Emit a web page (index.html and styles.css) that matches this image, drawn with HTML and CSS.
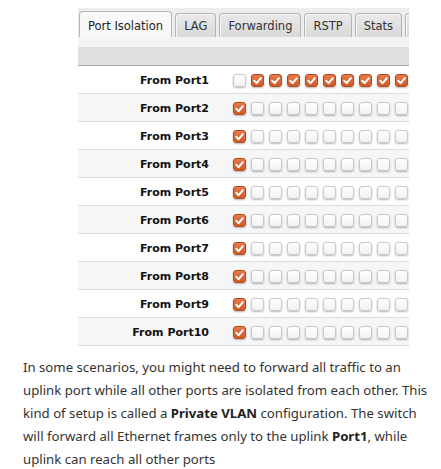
FILE: index.html
```html
<!DOCTYPE html>
<html>
<head>
<meta charset="utf-8">
<link rel="stylesheet" href="styles.css">
</head>
<body>
<div class="shot">
  <div class="tabbar">
    <div class="tab active">Port Isolation</div>
    <div class="tab">LAG</div>
    <div class="tab">Forwarding</div>
    <div class="tab">RSTP</div>
    <div class="tab">Stats</div>
    <div class="tab more"></div>
  </div>
  <div class="strip"></div>
  <div class="band"></div>
  <div class="rows" id="rows"></div>
</div>
<p class="text">In some scenarios, you might need to forward all traffic to an uplink port while all other ports are isolated from each other. This kind of setup is called a <b>Private VLAN</b> configuration. The switch will forward all Ethernet frames only to the uplink <b>Port1</b>, while uplink can reach all other ports</p>
<script>
(function () {
  var rows = document.getElementById('rows');
  var check = '<svg viewBox="0 0 13 13" width="13" height="13"><polyline points="3.2,6.8 5.6,9.1 9.9,4.2" fill="none" stroke="#fff" stroke-width="2" stroke-linecap="round" stroke-linejoin="round"/></svg>';
  for (var r = 1; r <= 10; r++) {
    var row = document.createElement('div');
    row.className = 'row' + (r % 2 === 0 ? ' alt' : '');
    var html = '<div class="label">From Port' + r + '</div><div class="boxes">';
    for (var c = 1; c <= 10; c++) {
      var on = r === 1 ? c !== 1 : c === 1;
      html += on ? '<span class="cb on">' + check + '</span>' : '<span class="cb"></span>';
    }
    html += '</div>';
    row.innerHTML = html;
    rows.appendChild(row);
  }
})();
</script>
</body>
</html>
```

FILE: styles.css
```css
html, body {
  margin: 0;
  padding: 0;
  background: #fff;
}

.shot {
  margin: 8px 0 0 78px;
  width: 331px;
  overflow: hidden;
}

.tabbar {
  height: 29px;
  background: #ededed;
  display: flex;
  align-items: flex-end;
  gap: 3px;
  padding-left: 1px;
  white-space: nowrap;
}

.tab {
  flex: none;
  height: 23px;
  line-height: 25px;
  padding: 0 8px;
  border: 1px solid #b4b4b4;
  border-bottom: none;
  border-radius: 4px 4px 0 0;
  background: linear-gradient(#e9e9e9, #d9d9d9);
  box-shadow: inset 1px 1px 0 #f8f8f8;
  font-family: "DejaVu Sans", Verdana, sans-serif;
  font-size: 11.5px;
  color: #333;
}

.tab.more {
  width: 40px;
}

.tab.active {
  height: 25px;
  line-height: 29px;
  background: #f8f8f8;
  box-shadow: none;
  color: #222;
}

.strip {
  height: 10px;
  background: #f3f3f3;
}

.band {
  height: 18px;
  background: #dfdfdf;
  border-bottom: 1px solid #acacac;
}

.row {
  display: flex;
  align-items: center;
  height: 27px;
  border-bottom: 1px solid #dcdcdc;
  background: #fff;
}

.row.alt {
  background: #f6f6f6;
}

.label {
  width: 131px;
  padding-top: 2px;
  text-align: right;
  font-family: "DejaVu Sans", Verdana, sans-serif;
  font-weight: bold;
  font-size: 11px;
  color: #111;
}

.boxes {
  display: flex;
  gap: 5px;
  padding-left: 24px;
  padding-top: 1px;
}

.cb {
  box-sizing: border-box;
  width: 13px;
  height: 13px;
  border-radius: 3px;
  border: 1px solid #c9c9c9;
  background: linear-gradient(#ffffff, #f2f2f2);
  box-shadow: 0 1px 2px rgba(0, 0, 0, 0.28);
  display: block;
  position: relative;
}

.cb.on {
  border-color: #b24a1f;
  background: linear-gradient(#e57a4a, #cf5a29);
}

.cb svg {
  position: absolute;
  left: -1px;
  top: -1px;
}

.text {
  margin: 10px 0 0 23px;
  width: 412px;
  font-family: "Noto Sans", "Open Sans", sans-serif;
  font-size: 13.2px;
  line-height: 23px;
  color: #333;
}

.text b {
  font-weight: bold;
  color: #222;
}
```
